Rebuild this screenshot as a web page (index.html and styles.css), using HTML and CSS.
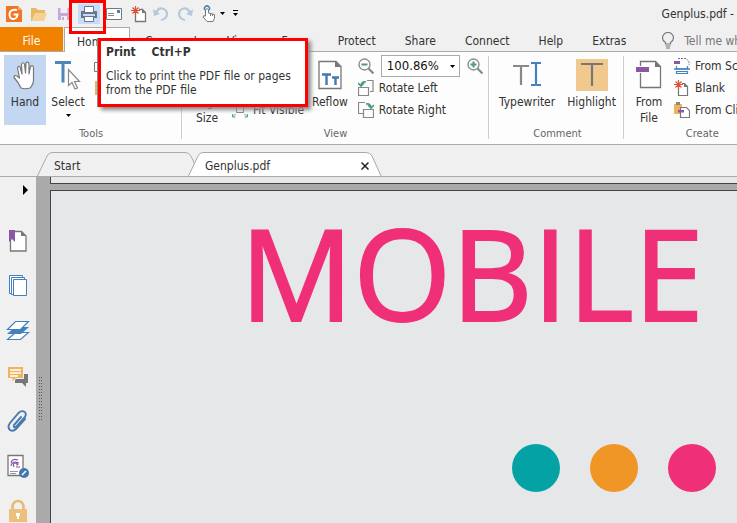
FILE: index.html
```html
<!DOCTYPE html>
<html lang="en">
<head>
    <meta charset="UTF-8">
    <meta name="viewport" content="width=device-width, initial-scale=1.0">
    <title>Genplus.pdf</title>
    <link rel="stylesheet" href="styles.css">
</head>
<body>
    <header class="titlebar">
        <div class="quick">
            <button aria-label="Application menu"><svg width="18" height="18"><path fill="#ef7622" d="M1 1h12l4 4v12H1z"/><path fill="#f7a66c" d="M13 1v4h4z"/><path fill="none" stroke="#fff" stroke-width="2" d="M12 5Q4 4 4.500 10Q5 14 8 14Q12 14 12.500 9.500H8.500"/></svg></button>
            <button aria-label="Open"><svg width="18" height="18"><path fill="#e9b865" d="M1 3h5l2 2h7v3H5l-3 8H1z"/><path fill="#f4d294" d="M5 8h12l-3 8H2z"/></svg></button>
            <button aria-label="Save"><svg width="16" height="16"><path fill="#c4abd3" d="M2 2h12v12H2z"/><path fill="#f3edf6" d="M4.500 2h7v5h-7zM5 10h6v4H5z"/><path fill="#c4abd3" d="M6 11h2v3H6z"/></svg></button>
            <button class="chosen" aria-label="Print"><svg width="18" height="18"><path fill="#66788c" d="M1 6h16v7H1z"/><path fill="#fff" stroke="#66788c" d="M4.500 1.500h9v6h-9z"/><path fill="#c8dcf5" d="M3 9h12v2H3z"/><path fill="#fff" stroke="#66788c" d="M4.500 11.500h9v5h-9z"/></svg></button>
            <button aria-label="Email"><svg width="16" height="14"><path fill="#fff" stroke="#777" d="M.5 1.500h15v11H.5z"/><path stroke="#888" d="M2 6.500h6M2 8.500h6"/><path fill="#4880bd" d="M11 3h3v3h-3z"/></svg></button>
            <button aria-label="New"><svg width="18" height="18"><path fill="#fff" stroke="#777" stroke-width="1.300" d="M5.500 4.500h7l3 3v9h-10z"/><path fill="#777" d="M12 4v4h4z"/><path stroke="#f0f0f0" stroke-width="4" d="M1 5.500h8M5.500 1v8"/><path stroke="#db5235" stroke-width="1.200" d="M1 5.500h9M5.500 1v9M2.500 2.500l6 6M8.500 2.500l-6 6"/></svg></button>
        </div>
        <div class="history">
            <button aria-label="Undo"><svg width="18" height="18"><path fill="none" stroke="#b4c7dd" stroke-width="2.200" d="M4 8Q6 3 10 3.500Q15 4.500 15 9Q14.500 14 9 15"/><path fill="#b4c7dd" d="M1 4l1 7 6-2z"/></svg></button>
            <button aria-label="Redo"><svg width="18" height="18"><path fill="none" stroke="#b4c7dd" stroke-width="2.200" d="M14 8Q12 3 8 3.500Q3 4.500 3 9Q3.500 14 9 15"/><path fill="#b4c7dd" d="M17 4l-1 7-6-2z"/></svg></button>
            <button aria-label="Touch mode"><svg width="16" height="18"><path fill="none" stroke="#4880bd" stroke-width="1.500" d="M4 5a2.500 2.500 0 1 1 4 0"/><path fill="#fff" stroke="#777" d="M4.500 11V4.500q1.500-1.500 3 0V8l6 1.500v4l-1.500 3H6L2 12q0-2 2.500-1z"/><path stroke="#777" d="M9.500 9v2M11.500 9v2"/></svg></button>
        </div>
        <svg class="caret" width="5" height="3"><path d="M0 0h5L2.500 3z"/></svg>
        <button class="customize" aria-label="Customize"><svg width="5" height="7"><path d="M0 0h5v1H0zM0 3h5L2.500 6z"/></svg></button>
        <span class="title">Genplus.pdf -</span>
    </header>

    <nav class="menu">
        <button class="file">File</button>
        <button class="current">Home</button>
        <button>Comment</button>
        <button>View</button>
        <button>Form</button>
        <button>Protect</button>
        <button>Share</button>
        <button>Connect</button>
        <button>Help</button>
        <button>Extras</button>
        <div class="tell">
            <label for="tell"><svg width="14" height="17"><path fill="none" stroke="#777" stroke-width="1.200" d="M4.500 12V10.500Q1.500 8.500 1.500 6a5.500 5.500 0 0 1 11 0q0 2.500-3 4.500V12zM4.500 14h5M5 16h4"/></svg></label>
            <input id="tell" type="text" placeholder="Tell me what you want" aria-label="Tell me what you want to do">
        </div>
    </nav>

    <section class="ribbon">
        <div class="group tools">
            <div class="items">
                <button class="big on">
                    <svg width="30" height="32" viewBox="0 0 30 32"><path fill="#fff" stroke="#777" stroke-width="1.200" stroke-linejoin="round" d="M11 29Q9 24 4 18.500Q4 15.500 7 17L9.500 19L7.500 9Q8 6.500 10 8L12 15L11.500 5Q13 2.500 14.500 5L15.500 14L16 4Q17.500 2 19 4.500L19 15L20.500 7.500Q23 5.500 23.500 8.500V19Q24 25 20 29Q15 30.500 11 29z"/></svg>
                    Hand
                </button>
                <button class="big">
                    <svg width="32" height="32" viewBox="0 0 32 32"><path fill="none" stroke="#4c86bb" stroke-width="3" d="M3 3.500h16M11 3.500v20"/><path fill="#fff" stroke="#888" stroke-width="1.200" d="M16.500 10.500v16l3.500-3 3 6.500 2.500-1-3-6.500h5z"/></svg>
                    Select
                    <svg class="drop" width="5" height="3"><path d="M0 0h5L2.500 3z"/></svg>
                </button>
                <div class="stack">
                    <button aria-label="SnapShot"><svg width="18" height="16"><path fill="#fff" stroke="#777" d="M.5 4.500h14v9H.5z"/></svg></button>
                    <button aria-label="Clipboard"><svg width="18" height="16"><path fill="#f0b35c" d="M1 1h12v14H1z"/></svg></button>
                </div>
            </div>
            <div class="caption">Tools</div>
        </div>

        <div class="group view">
            <div class="items">
                <button class="big size">
                    <svg width="26" height="32" viewBox="0 0 26 32"><path fill="#fff" stroke="#777" d="M2.500 2.500h20v26h-20z"/></svg>
                    <span>Page<br>Size</span>
                </button>
                <div class="stack fit">
                    <button><svg width="16" height="16"><path fill="#fff" stroke="#888" d="M3.500 1.500h8v10h-8z"/></svg>Fit Page</button>
                    <button><svg width="16" height="16"><path fill="#fff" stroke="#888" d="M3.500 1.500h8v10h-8z"/></svg>Fit Width</button>
                    <button><svg width="16" height="16"><path fill="#fff" stroke="#888" d="M4.500 1.500h7v9h-7z"/><path fill="none" stroke="#55a58a" d="M.5 12v3h3M.5 15l3-3M15.500 12v3h-3M15.500 15l-3-3"/></svg>Fit Visible</button>
                </div>
                <button class="big">
                    <svg width="26" height="32" viewBox="0 0 26 32"><path fill="#fff" stroke="#777" stroke-width="1.300" d="M2 2.500h17l5 5v22H2z"/><path fill="#777" d="M18 2v6h6z"/><path fill="none" stroke="#4477b3" stroke-width="2.400" d="M5 15.500h9M9.500 15.500V26M15 18.500h7M18.500 18.500V26"/></svg>
                    Reflow
                </button>
                <div class="stack">
                    <div class="zoom">
                        <button aria-label="Zoom out"><svg width="16" height="16"><circle cx="6.500" cy="6.500" r="5.500" fill="#fff" stroke="#888" stroke-width="1.300"/><path stroke="#888" stroke-width="2.200" d="M10.500 10.500l5 5"/><path stroke="#4a9a7c" stroke-width="2" d="M3.500 6.500h6"/></svg></button>
                        <div class="level">
                            <select aria-label="Zoom level"><option>100.86%</option></select>
                            <svg width="5" height="3"><path d="M0 0h5L2.500 3z"/></svg>
                        </div>
                        <button aria-label="Zoom in"><svg width="16" height="16"><circle cx="6.500" cy="6.500" r="5.500" fill="#fff" stroke="#888" stroke-width="1.300"/><path stroke="#888" stroke-width="2.200" d="M10.500 10.500l5 5"/><path stroke="#4a9a7c" stroke-width="2" d="M3.500 6.500h6M6.500 3.500v6"/></svg></button>
                    </div>
                    <button><svg width="16" height="16"><path fill="none" stroke="#888" stroke-width="1.200" d="M.5 7.500h10v8H.5zM9 .5h6v11h-3"/><path fill="none" stroke="#4a9a7c" stroke-width="1.600" d="M8 2Q3 1 3 6M0 3l3 3 3-3"/></svg>Rotate Left</button>
                    <button><svg width="16" height="16"><path fill="none" stroke="#888" stroke-width="1.200" d="M5.500 7.500h10v8h-10zM5 11.500H.5V.5H7"/><path fill="none" stroke="#4a9a7c" stroke-width="1.600" d="M8 2q5-1 5 4M10 3l3 3 3-3"/></svg>Rotate Right</button>
                </div>
            </div>
            <div class="caption">View</div>
        </div>

        <div class="group comment">
            <div class="items">
                <button class="big">
                    <svg width="32" height="32" viewBox="0 0 32 32"><path fill="none" stroke="#888" stroke-width="2.200" d="M2 7h16M10 7v19"/><path fill="none" stroke="#4480bd" stroke-width="2.200" d="M20 4h4q1 0 1 1v20q0 1-1 1h-4M30 4h-4q-1 0-1 1v20q0 1 1 1h4"/></svg>
                    Typewriter
                </button>
                <button class="big">
                    <svg width="32" height="32" viewBox="0 0 32 32"><path fill="#f1c98f" d="M0 0h32v32H0z"/><path stroke="#777" stroke-width="2.200" d="M5 5h22M16 5v22"/></svg>
                    Highlight
                </button>
            </div>
            <div class="caption">Comment</div>
        </div>

        <div class="group create">
            <div class="items">
                <button class="big">
                    <svg width="32" height="32" viewBox="0 0 32 32"><path fill="#fff" stroke="#777" stroke-width="1.300" d="M7.500 2.500h15l5 5v21h-20z"/><path fill="#777" d="M22 2v6h6z"/><path fill="#8a56a5" stroke="#fff" d="M2.500 7.500h14v6h-14z"/></svg>
                    <span>From<br>File</span>
                </button>
                <div class="stack">
                    <button><svg width="16" height="16"><path fill="none" stroke="#777" stroke-dasharray="2 1" d="M4 .5h8l3 3V7"/><path fill="#8a56a5" d="M0 3h6v3H0z"/><path fill="#fff" stroke="#4480bd" stroke-width="1.200" d="M2.500 8V11h11V8M2.500 15.500v-2h11v2z"/><path stroke="#4480bd" stroke-width="1.500" d="M0 11h16"/></svg>From Scanner</button>
                    <button><svg width="16" height="16"><path fill="#fff" stroke="#777" stroke-width="1.200" d="M4.500 3.500h6l3 3v9h-9z"/><path fill="#777" d="M10 3v4h4z"/><path stroke="#fdfdfd" stroke-width="3" d="M1 4.500h7M4.500 1v7"/><path stroke="#db5235" stroke-width="1.200" d="M0 4.500h9M4.500 0v9M1.500 1.500l6 6M7.500 1.500l-6 6"/></svg>Blank</button>
                    <button><svg width="16" height="16"><path fill="#f0b35c" d="M0 2h8v10H0z"/><path fill="#888" d="M2 0h4v3H2z"/><path fill="#fff" stroke="#777" stroke-width="1.200" d="M6.500 5.500h6l3 3v7h-9z"/><path fill="#8a56a5" d="M4 8h6v2.500H4z"/></svg>From Clipboard</button>
                </div>
            </div>
            <div class="caption">Create</div>
        </div>
    </section>

    <div class="doctabs">
        <button class="doctab">
            <svg width="174" height="24"><path fill="#f0f0f0" stroke="#aaa" d="M.5 24L10 4q2-3.500 5-3.500H148q4 0 6 3.500L163 24"/></svg>
            <span>Start</span>
        </button>
        <div class="doctab open">
            <svg width="194" height="24"><path fill="#fff" stroke="#aaa" d="M.5 24L10 4q2-3.500 5-3.500H178q4 0 6 3.500L193 24"/></svg>
            <span>Genplus.pdf</span>
            <button aria-label="Close"><svg width="8" height="8"><path stroke="#222" stroke-width="1.500" d="M.5.5l7 7M7.500.5l-7 7"/></svg></button>
        </div>
    </div>

    <main class="work">
        <aside class="side">
            <button class="expand" aria-label="Expand"><svg width="5" height="10"><path d="M0 0l5 5-5 5z"/></svg></button>
            <button aria-label="Bookmarks"><svg width="20" height="24"><path fill="#fff" stroke="#777" stroke-width="1.300" d="M2.500 2.500h11l4.500 4.500v15H2.500z"/><path fill="#777" d="M13 2v5h5z"/><path fill="#8a56a5" d="M1 1h6v12l-3-3-3 3z"/></svg></button>
            <button aria-label="Pages"><svg width="20" height="24"><path fill="#fff" stroke="#4480bd" d="M1.500 1.500h13v18h-13z"/><path fill="#fff" stroke="#4480bd" d="M3.500 3.500h13v17h-13z"/><path fill="#fff" stroke="#4480bd" d="M5.500 5.500h13v16h-13z"/></svg></button>
            <button aria-label="Layers"><svg width="24" height="24"><path fill="#fff" stroke="#4480bd" stroke-width="1.200" d="M1.500 20.500l8-7h13l-8 7z"/><path fill="#4480bd" d="M1 15l8-7h14l-8 7z"/><path fill="#fff" stroke="#4480bd" stroke-width="1.200" d="M1.500 10.500l8-8h13l-8 8z"/></svg></button>
            <button aria-label="Comments"><svg width="22" height="22"><path fill="#777" d="M16 9h5v9h-2v4l-4-4H8v-4h8z"/><path fill="#efb45f" stroke="#f0f0f0" d="M.5 1.500h16v12H9L5 17v-3.500H.5z"/><path stroke="#fff" stroke-width="1.300" d="M3 5h11M3 8h11M3 11h8"/></svg></button>
            <button aria-label="Attachments"><svg width="22" height="24"><path fill="none" stroke="#4a78b0" stroke-width="1.900" stroke-linecap="round" d="M14 8l-7 8q-1 3 2 2l9-10q2-4-1-5.500q-3-1-5 1L3 14q-3 4 0 7q3 2 6-1l9-10"/></svg></button>
            <button aria-label="Signatures"><svg width="24" height="24"><path fill="#fff" stroke="#777" stroke-width="1.300" d="M2 1.500h15v20H2z"/><path stroke="#999" d="M4 17.500h8M4 19.500h6"/><path fill="none" stroke="#8a56a5" stroke-width="1.200" d="M5 9Q6 4 12 6M5 12q1-6 8-3M8 13q-2-4 2-4q4 2 0 2M10 13h4"/><circle cx="18" cy="19" r="5" fill="#4078ad"/><path stroke="#fff" stroke-width="1.600" d="M16 21l4-4"/></svg></button>
            <button aria-label="Security"><svg width="20" height="24"><path fill="none" stroke="#e9b871" stroke-width="2.600" d="M4.500 11V7.500a5.500 5.500 0 0 1 11 0V11"/><path fill="#edbf7d" d="M1 10h18v13H1z"/><path fill="#fff" d="M8 14h4v3h-1v3H9v-3H8z"/></svg></button>
        </aside>
        <div class="splitter"></div>
        <div class="pages">
            <div class="previous"></div>
            <article class="page">
                <h1>MOBILE</h1>
                <div class="dots">
                    <i class="teal"></i>
                    <i class="orange"></i>
                    <i class="pink"></i>
                </div>
            </article>
        </div>
    </main>

    <div class="marker"></div>
    <div class="tooltip" role="tooltip">
        <h2>Print <kbd>Ctrl+P</kbd></h2>
        <p>Click to print the PDF file or pages from the PDF file</p>
    </div>
</body>
</html>
```
FILE: styles.css
```css
*{
    margin: 0;
    padding: 0;
    box-sizing: border-box;
}
body{
    display: flex;
    flex-direction: column;
    height: 100vh;
    overflow: hidden;
    background: #f0f0f0;
    color: #333;
    font-family: "DejaVu Sans Condensed", "Noto Sans", sans-serif;
    font-size: 12px;
    line-height: 16px;
    white-space: nowrap;
}
button, input, select{
    border: 0;
    background: none;
    color: inherit;
    font: inherit;
    white-space: nowrap;
}
svg{
    display: block;
    flex: none;
}

/* title bar */
.titlebar{
    display: flex;
    align-items: center;
    height: 27px;
    flex: none;
    padding-left: 3px;
}
.quick, .history{
    display: flex;
    gap: 3px;
}
.titlebar button{
    display: flex;
    align-items: center;
    justify-content: center;
    width: 22px;
    height: 20px;
}
.titlebar .chosen{
    background: #c8dcf5;
}
.history{
    gap: 2px;
}
.titlebar .customize{
    width: 20px;
}
.title{
    margin-left: auto;
    padding-right: 3px;
}

/* menu tabs */
.menu{
    display: flex;
    gap: 1px;
    height: 25px;
    flex: none;
    border-bottom: 1px solid #aaa;
}
.menu button{
    padding: 4px 14px 0;
}
.menu .file{
    width: 63px;
    background: #f08200;
    color: #fff;
}
.menu .current{
    width: 66px;
    height: 25px;
    padding: 3px 12px 0;
    border: 1px solid #aaa;
    border-bottom: 0;
    background: #fff;
    text-align: left;
}
.tell{
    display: flex;
    align-items: center;
    gap: 9px;
    flex: 1;
    min-width: 0;
    margin-left: 20px;
    padding-top: 3px;
    color: #777;
}
.tell input{
    flex: 1;
    min-width: 0;
}
.tell input::placeholder{
    color: #777;
}

/* ribbon */
.ribbon{
    display: flex;
    height: 93px;
    flex: none;
    overflow: hidden;
    border-bottom: 1px solid #aaa;
    background: #fdfdfd;
}
.group{
    position: relative;
    display: flex;
    flex-direction: column;
    flex: none;
    padding: 3px 4px 0;
}
.group::after{
    content: "";
    position: absolute;
    top: 4px;
    right: 0;
    bottom: 5px;
    width: 1px;
    background: #ccc;
}
.tools{
    width: 182px;
}
.view{
    width: 307px;
}
.comment{
    width: 135px;
    padding-left: 6px;
}
.items{
    display: flex;
    gap: 4px;
    height: 70px;
}
.big{
    display: flex;
    flex-direction: column;
    align-items: center;
    gap: 3px;
    min-width: 42px;
    padding: 4px 4px 0;
}
.big.on{
    background: #c3d6f2;
}
.tools .big{
    min-width: 36px;
    padding: 4px 0 0;
}
.tools .big.on{
    width: 42px;
}
.drop{
    margin-top: 1px;
}
.stack{
    display: flex;
    flex-direction: column;
    align-items: flex-start;
}
.tools .stack{
    padding-left: 4px;
}
.view .stack{
    padding-left: 2px;
}
.stack button{
    display: flex;
    align-items: center;
    gap: 5px;
    height: 22px;
}
.view .fit{
    width: 72px;
    padding-left: 0;
}
.zoom{
    display: flex;
    gap: 7px;
}
.level{
    position: relative;
}
.level select{
    width: 79px;
    height: 22px;
    padding-left: 5px;
    appearance: none;
    border: 1px solid #aaa;
    background: #fff;
    color: #111;
    font-size: 13px;
}
.level svg{
    position: absolute;
    top: 10px;
    right: 5px;
    pointer-events: none;
}
.caption{
    text-align: center;
    color: #666;
    font-size: 11px;
    line-height: 18px;
}

/* document tabs */
.doctabs{
    display: flex;
    align-items: flex-end;
    height: 32px;
    flex: none;
    padding-left: 37px;
    border-bottom: 1px solid #aaa;
}
.doctab{
    position: relative;
    display: flex;
    align-items: center;
    width: 151px;
    height: 24px;
    padding: 4px 12px 0 17px;
}
.doctab > svg{
    position: absolute;
    top: 0;
    left: 0;
}
.doctab span, .doctab button{
    position: relative;
}
.open{
    width: 193px;
}
.open button{
    margin-left: auto;
}

/* work area */
.work{
    display: flex;
    flex: 1;
    min-height: 0;
    overflow: hidden;
    background: #aaa;
}
.side{
    width: 36px;
    flex: none;
    background: #f0f0f0;
}
.side button{
    display: flex;
    align-items: center;
    justify-content: center;
    width: 36px;
    height: 45px;
}
.side .expand{
    height: 41px;
    padding: 0 8px 16px 0;
    justify-content: flex-end;
}
.splitter{
    align-self: center;
    width: 4px;
    height: 44px;
    flex: none;
    margin: 98px 7px 0 3px;
    background-image: linear-gradient(90deg, transparent 1px, #aaa 1px), linear-gradient(#555 1px, transparent 1px);
    background-size: 2px 3px;
}
.pages{
    display: flex;
    flex-direction: column;
    flex: 1;
    min-width: 0;
}
.previous{
    height: 7px;
    border-left: 1px solid #444;
    border-bottom: 1px solid #444;
    background: #e6e7e9;
}
.page{
    flex: 1;
    margin-top: 6px;
    padding-left: 189px;
    border-top: 1px solid #444;
    border-left: 1px solid #444;
    background: #e6e7e9;
}
.page h1{
    color: #f02f79;
    -webkit-text-stroke: 2px #f02f79;
    font-family: "Open Sans", sans-serif;
    font-size: 126px;
    font-weight: 400;
    line-height: 162px;
}
.dots{
    display: flex;
    gap: 30px;
    padding: 91px 0 0 272px;
}
.dots i{
    width: 48px;
    height: 48px;
    border-radius: 50%;
}
.teal{
    background: #04a2a5;
}
.orange{
    background: #ef9626;
}
.pink{
    background: #f02f79;
}

/* print hint */
.marker{
    position: absolute;
    top: 0;
    left: 69px;
    width: 37px;
    height: 34px;
    border: 3px solid #f00;
}
.tooltip{
    position: absolute;
    top: 38px;
    left: 98px;
    width: 210px;
    height: 69px;
    padding: 4px 5px;
    border: 3px solid #f00;
    background: #fff;
    box-shadow: -1px 0 0 #888, 3px 3px 4px #888;
    line-height: 14px;
    white-space: normal;
}
.tooltip h2{
    font-size: 12px;
}
.tooltip kbd{
    margin-left: 12px;
    font-family: inherit;
}
.tooltip p{
    margin-top: 10px;
}
```
